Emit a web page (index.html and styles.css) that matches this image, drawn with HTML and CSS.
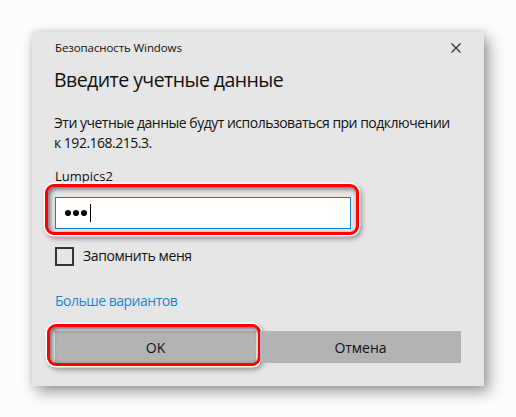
FILE: index.html
```html
<!DOCTYPE html>
<html lang="ru">
<head>
<meta charset="utf-8">
<title>Безопасность Windows</title>
<link rel="stylesheet" href="styles.css">
</head>
<body>
<div class="dialog">
  <div class="titlebar">
    <span class="title">Безопасность Windows</span>
    <svg class="close" width="10" height="10" viewBox="0 0 10 10"><path d="M0.5 0.5 L9.5 9.5 M9.5 0.5 L0.5 9.5" stroke="#2b2b2b" stroke-width="1.1" fill="none"/></svg>
  </div>
  <h1 class="heading">Введите учетные данные</h1>
  <p class="desc">Эти учетные данные будут использоваться при подключении к 192.168.215.3.</p>
  <div class="user">Lumpics2</div>
  <div class="field highlight-field">
    <span class="dot"></span><span class="dot"></span><span class="dot"></span><span class="caret"></span>
  </div>
  <label class="remember"><span class="box"></span><span class="remember-text">Запомнить меня</span></label>
  <a class="more" href="#">Больше вариантов</a>
  <div class="buttons">
    <button class="btn highlight-btn">OK</button>
    <button class="btn">Отмена</button>
  </div>
</div>
</body>
</html>
```
FILE: styles.css
```css
* { box-sizing: border-box; }
html, body { margin: 0; padding: 0; }
body {
  background: #fcfcfc;
  width: 516px;
  height: 417px;
  padding: 32px 0 0 32px;
  font-family: "Open Sans", "Noto Sans", sans-serif;
  color: #111;
  overflow: hidden;
}
.dialog {
  width: 452px;
  height: 354px;
  background: #e6e6e6;
  box-shadow: 5px 6px 14px rgba(0, 0, 0, 0.38), 0 0 6px rgba(0,0,0,0.12);
  padding: 8px 23px 0 23px;
  display: flex;
  flex-direction: column;
  align-items: flex-start;
}
.titlebar {
  width: 100%;
  display: flex;
  justify-content: space-between;
  align-items: center;
  height: 16px;
}
.title {
  font-size: 11.5px;
  line-height: 16px;
  letter-spacing: -0.1px;
}
.heading {
  margin: 10px 0 0 -1px;
  font-size: 19.5px;
  line-height: 28px;
  font-weight: normal;
  letter-spacing: -0.55px;
}
.desc {
  margin: 19px 0 0 -1px;
  font-size: 14px;
  line-height: 20px;
  width: 400px;
  letter-spacing: -0.5px;
}
.user {
  margin-top: 14px;
  font-size: 13px;
  line-height: 18px;
}
.field {
  position: relative;
  margin-top: 12px;
  width: 296px;
  height: 32px;
  background: #fff;
  border: 1px solid #1580c8;
  display: flex;
  align-items: center;
  padding-left: 9px;
  gap: 2px;
}
.dot {
  width: 6px;
  height: 6px;
  border-radius: 50%;
  background: #000;
}
.caret {
  width: 1px;
  height: 18px;
  background: #000;
  margin-left: 1px;
}
.highlight-field::after,
.highlight-btn::after {
  content: "";
  position: absolute;
  border: 3.5px solid #ff0000;
  border-radius: 9px;
  box-shadow: 0 0 0 1.5px #fff, 2px 3px 5px 1px rgba(0,0,0,0.35), inset 2px 2px 5px rgba(0,0,0,0.55);
  pointer-events: none;
}
.highlight-field::after {
  left: -11px; right: -9px; top: -14px; bottom: -7px;
}
.remember {
  margin-top: 17px;
  display: flex;
  align-items: center;
  gap: 9px;
}
.box {
  width: 19px;
  height: 19px;
  border: 2px solid #333;
}
.remember-text {
  font-size: 14px;
  line-height: 20px;
  letter-spacing: -0.4px;
}
.more {
  margin-top: 25px;
  font-size: 14px;
  line-height: 20px;
  color: #1a86d0;
  text-decoration: none;
  letter-spacing: -0.5px;
}
.buttons {
  margin-top: 20px;
  width: 406px;
  display: flex;
  gap: 4px;
}
.btn {
  position: relative;
  flex: 1;
  height: 32px;
  border: none;
  background: #b3b3b3;
  font-family: "Open Sans", "Noto Sans", sans-serif;
  font-size: 14px;
  color: #111;
  padding: 0;
}
.highlight-btn::after {
  left: -8px; right: -5px; top: -7px; bottom: -3px;
}
```
